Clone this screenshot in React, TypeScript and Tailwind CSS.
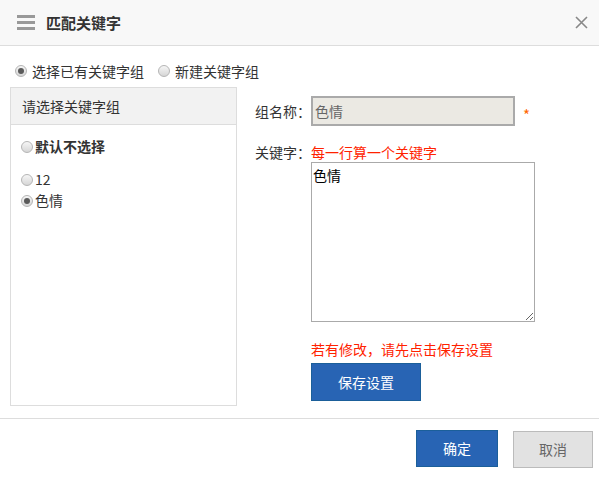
import { useState } from "react";

const font = { fontFamily: '"Noto Sans CJK SC", "Microsoft YaHei", sans-serif' };

function Radio({ checked }: { checked?: boolean }) {
  return (
    <span className="inline-flex h-[12px] w-[12px] shrink-0 items-center justify-center rounded-full border border-[#b5b5b5] bg-linear-to-b from-[#f6f6f6] to-[#d6d6d6]">
      {checked && <span className="h-[6px] w-[6px] rounded-full bg-[#5a5a5a]" />}
    </span>
  );
}

function Hamburger() {
  return (
    <svg width="18" height="15" viewBox="0 0 18 15">
      <rect x="0" y="0" width="18" height="3" fill="#999" />
      <rect x="0" y="6" width="18" height="3" fill="#999" />
      <rect x="0" y="12" width="18" height="3" fill="#999" />
    </svg>
  );
}

function CloseIcon() {
  return (
    <svg width="13" height="13" viewBox="0 0 13 13">
      <path d="M1 1L12 12M12 1L1 12" stroke="#888" strokeWidth="1.6" />
    </svg>
  );
}

function App() {
  const [group, setGroup] = useState("色情");

  return (
    <div className="flex h-[478px] w-[599px] flex-col bg-white text-[14px] text-[#333]" style={font}>
      <header className="flex h-[46px] shrink-0 items-center border-b border-[#ddd] bg-[#f8f8f8] pl-[17px] pr-[11px]">
        <Hamburger />
        <span className="ml-[11px] text-[15px] font-bold leading-[20px]">匹配关键字</span>
        <span className="ml-auto flex">
          <CloseIcon />
        </span>
      </header>

      <div className="flex-1 px-[10px] pt-[15px]">
        <div className="flex h-[20px] items-center pl-[5px] leading-[20px]">
          <Radio checked />
          <span className="ml-[5px]">选择已有关键字组</span>
          <span className="ml-[14px] flex items-center">
            <Radio />
            <span className="ml-[5px]">新建关键字组</span>
          </span>
        </div>

        <div className="mt-[6px] flex">
          <div className="h-[319px] w-[227px] shrink-0 border border-[#ddd]">
            <div className="flex h-[37px] items-center border-b border-[#ddd] bg-[#f2f2f2] pl-[11px]">
              请选择关键字组
            </div>
            <div className="pl-[10px] pt-[11px] leading-[21px]">
              <div className="flex h-[21px] items-center gap-[2px] font-bold" onClick={() => setGroup("")}>
                <Radio checked={group === ""} />
                <span>默认不选择</span>
              </div>
              <div className="mt-[12px] flex h-[21px] items-center gap-[2px]" onClick={() => setGroup("12")}>
                <Radio checked={group === "12"} />
                <span>12</span>
              </div>
              <div className="flex h-[21px] items-center gap-[2px]" onClick={() => setGroup("色情")}>
                <Radio checked={group === "色情"} />
                <span>色情</span>
              </div>
            </div>
          </div>

          <div className="ml-[18px] flex flex-col pt-[9px]">
            <div className="flex items-center">
              <span className="w-[56px]">组名称：</span>
              <input
                readOnly
                value={group}
                className="h-[30px] w-[204px] border-2 border-[#aaa] bg-[#ebe9e3] px-[2px] text-[14px] text-[#666] outline-none"
              />
              <span className="ml-[8px] mt-[6px] text-[15px] leading-[15px] text-[#f60]">*</span>
            </div>
            <div className="mt-[16px] flex h-[20px] items-center">
              <span className="w-[56px]">关键字：</span>
              <span className="text-[#f20]">每一行算一个关键字</span>
            </div>
            <textarea
              defaultValue="色情"
              className="ml-[56px] h-[160px] w-[224px] border border-[#aaa] px-[1px] py-[2px] text-[14px] leading-[20px] text-black outline-none"
            />
            <div className="ml-[56px] mt-[17px] h-[20px] leading-[20px] text-[#f20]">若有修改，请先点击保存设置</div>
            <button className="ml-[56px] mt-[4px] h-[38px] w-[110px] border border-[#1b5f9a] bg-[#2864b4] text-[14px] text-white">
              保存设置
            </button>
          </div>
        </div>
      </div>

      <footer className="flex h-[60px] shrink-0 items-start justify-end gap-[15px] border-t border-[#ddd] pr-[6px] pt-[11px]">
        <button className="h-[37px] w-[82px] border border-[#1b5f9a] bg-[#2864b4] text-[14px] text-white">确定</button>
        <button className="mt-[1px] h-[37px] w-[80px] border border-[#bbb] bg-[#e2e2e2] text-[14px] text-[#666]">取消</button>
      </footer>
    </div>
  );
}

export default App;
